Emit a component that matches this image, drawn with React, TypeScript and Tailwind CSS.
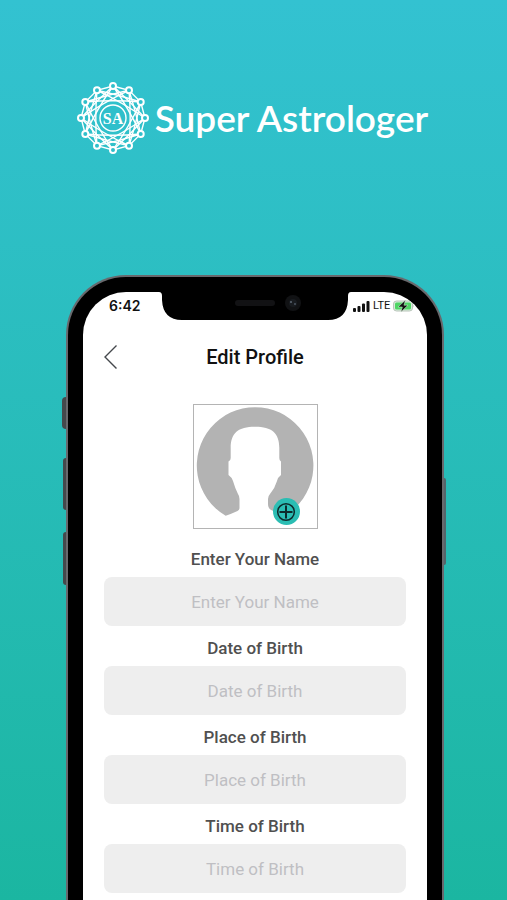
import React, { useState } from 'react';

const fields = [
  { id: 'name', label: 'Enter Your Name' },
  { id: 'birthDate', label: 'Date of Birth' },
  { id: 'birthPlace', label: 'Place of Birth' },
  { id: 'birthTime', label: 'Time of Birth' },
];

const nodes = Array.from({ length: 12 }, (_, i) => {
  const a = (i * Math.PI) / 6;
  return { x: 36 + 32 * Math.sin(a), y: 36 - 32 * Math.cos(a) };
});

// Arc between two nodes, bowed slightly away from the centre
const arc = (from: number, step: number, bow: number) => {
  const a = nodes[from];
  const b = nodes[(from + step) % 12];
  const cx = 36 + ((a.x + b.x) / 2 - 36) * bow;
  const cy = 36 + ((a.y + b.y) / 2 - 36) * bow;
  return `M${a.x} ${a.y}Q${cx} ${cy} ${b.x} ${b.y}`;
};

function Logo() {
  return (
    <svg viewBox="0 0 72 72" className="h-[72px] w-[72px] shrink-0" aria-hidden="true">
      <g fill="none" stroke="white" strokeWidth="1.4">
        <polygon points={nodes.map((n) => `${n.x},${n.y}`).join(' ')} />
        {nodes.map((_, i) => (
          <path key={i} d={arc(i, 3, 1.05) + arc(i, 4, 1.15)} />
        ))}
        <circle cx="36" cy="36" r="13" fill="#2fbfcb" />
      </g>
      {nodes.map((n, i) => (
        <circle key={i} cx={n.x} cy={n.y} r="3" fill="#2fbfcb" stroke="white" strokeWidth="2" />
      ))}
      <text
        x="36"
        y="42"
        textAnchor="middle"
        fill="white"
        className="font-['Liberation_Serif',serif] text-[16px] font-bold"
      >
        SA
      </text>
    </svg>
  );
}

function Notch() {
  return (
    <svg viewBox="0 0 192 28" className="h-7 w-[192px]" aria-hidden="true">
      <path d="M0 0Q3 0 3 4V8Q4 28 23 28H169Q188 28 189 8V4Q189 0 192 0Z" fill="black" />
      <rect x="76" y="8" width="40" height="6" rx="3" fill="#121214" />
      <circle cx="134" cy="11" r="8" fill="#111214" />
      <circle cx="134" cy="11" r="4" fill="#191c20" />
      <circle cx="132" cy="10" r="1" fill="#5b6672" />
      <circle cx="136" cy="12" r="1" fill="#4b5560" />
    </svg>
  );
}

function StatusBar() {
  return (
    <div className="grid grid-cols-[1fr_192px_1fr]">
      <span className="pl-[26px] font-['Inter',sans-serif] text-sm leading-7 font-semibold text-[#111]">6:42</span>
      <Notch />
      <div className="flex items-center gap-[3px] pl-[2px]">
        <svg viewBox="0 0 17 11" className="h-[11px] w-[17px] shrink-0" fill="#111" aria-hidden="true">
          <rect x="0" y="7" width="3" height="4" rx="1" />
          <rect x="4.5" y="5" width="3" height="6" rx="1" />
          <rect x="9" y="2.5" width="3" height="8.5" rx="1" />
          <rect x="13.5" y="0" width="3" height="11" rx="1" />
        </svg>
        <span className="font-['Roboto',sans-serif] text-[11px] leading-7 text-[#111]">LTE</span>
        <svg viewBox="0 0 22 12" className="h-3 w-[22px] shrink-0" aria-hidden="true">
          <rect x="0.5" y="1" width="19" height="10" rx="3" fill="#d5ecd8" stroke="#b9c4ba" />
          <rect x="2" y="2.5" width="16" height="7" rx="1.5" fill="#4fd565" />
          <path d="M20.5 4.5Q21.7 6 20.5 7.5Z" fill="#a9b3aa" />
          <path d="M12.500 0L5 7H9.300L8 12L15 5.200H11Z" fill="#111" stroke="#d8f5dc" strokeWidth="0.5" />
        </svg>
      </div>
    </div>
  );
}

function Avatar() {
  return (
    <div className="relative mx-auto h-[125px] w-[125px] border border-[#b4b4b4]">
      <svg viewBox="1 1 123 123" className="h-full w-full" aria-hidden="true">
        <path
          d="M32.7 111.8A58.3 58.3 0 1 1 91.5 111.8L78 106Q75 104 75 100V95Q75 92 77 90Q82 84 84 77Q85 73 88 71V57.500Q86.300 57 86.300 54V44C86.300 29 79 22.700 62 22.700S37.700 29 37.700 44V54Q37.700 57 35.500 57.500V71Q38.500 73 40 77Q42 84 45 90Q46.500 92 46.500 95V104Q46.500 106 44.500 107Q38 110 32.700 111.800Z"
          fill="#b3b3b3"
        />
      </svg>
      <button
        type="button"
        aria-label="Change photo"
        className="absolute right-[17px] bottom-[3px] flex h-[27px] w-[27px] items-center justify-center rounded-full bg-[#2bbdb3]"
      >
        <svg viewBox="0 0 20 20" className="h-5 w-5" fill="none" stroke="#0d2b2c" aria-hidden="true">
          <circle cx="10" cy="10" r="8.3" strokeWidth="1.5" />
          <path d="M10 3.500V16.500M3.500 10H16.500" strokeWidth="2" />
        </svg>
      </button>
    </div>
  );
}

export default function App() {
  const [values, setValues] = useState<Record<string, string>>({});

  return (
    <div className="flex min-h-screen flex-col bg-linear-to-b from-[#33c2d1] to-[#1bb6a1]">
      <header className="flex items-center justify-center gap-[6px] pt-[82px] pr-[2px]">
        <Logo />
        <h1 className="font-['Lato',sans-serif] text-[37px] leading-[72px] font-semibold whitespace-nowrap text-white">
          Super Astrologer
        </h1>
      </header>

      <main className="mt-[121px] flex flex-1 flex-col pr-[63px] pl-[66px]">
        {/* Phone body */}
        <div className="relative flex flex-1 flex-col rounded-t-[60px] border-x-2 border-t-2 border-[#68696d] bg-black px-[15px] pt-[15px]">
          <span className="absolute top-[120px] -left-[6px] h-8 w-1 rounded-l-sm bg-[#45494c]" />
          <span className="absolute top-[181px] -left-[5px] h-[52px] w-[3px] rounded-l-sm bg-[#45494c]" />
          <span className="absolute top-[255px] -left-[5px] h-[53px] w-[3px] rounded-l-sm bg-[#45494c]" />
          <span className="absolute top-[201px] -right-[4px] h-[87px] w-[2px] rounded-r-sm bg-[#55656a]" />

          <div className="flex-1 overflow-hidden rounded-t-[43px] bg-white">
            <StatusBar />

            <div className="px-[21px] font-['Roboto',sans-serif]">
              <div className="mt-4 grid h-[42px] grid-cols-[24px_1fr_24px] items-center">
                <button type="button" aria-label="Back">
                  <svg viewBox="0 0 13 24" className="h-6 w-[13px]" fill="none" stroke="#44484c" strokeWidth="1.4" aria-hidden="true">
                    <path d="M12.500 0.500L1 12L12.500 23.500" />
                  </svg>
                </button>
                <h2 className="text-center text-xl font-medium text-[#111]">Edit Profile</h2>
              </div>

              <div className="mt-[26px] mb-2">
                <Avatar />
              </div>

              <form className="pb-[6px]">
                {fields.map((field) => (
                  <div key={field.id}>
                    <label htmlFor={field.id} className="block pt-1 text-center text-[17px] leading-9 font-medium text-[#505050]">
                      {field.label}
                    </label>
                    <input
                      id={field.id}
                      type="text"
                      placeholder={field.label}
                      value={values[field.id] || ''}
                      onChange={(e) => setValues({ ...values, [field.id]: e.target.value })}
                      className="block h-[49px] w-full rounded-lg bg-[#eeeeee] text-center text-[17px] text-[#505050] placeholder:text-[#bfbfc3]"
                    />
                  </div>
                ))}
              </form>
            </div>
          </div>
        </div>
      </main>
    </div>
  );
}
